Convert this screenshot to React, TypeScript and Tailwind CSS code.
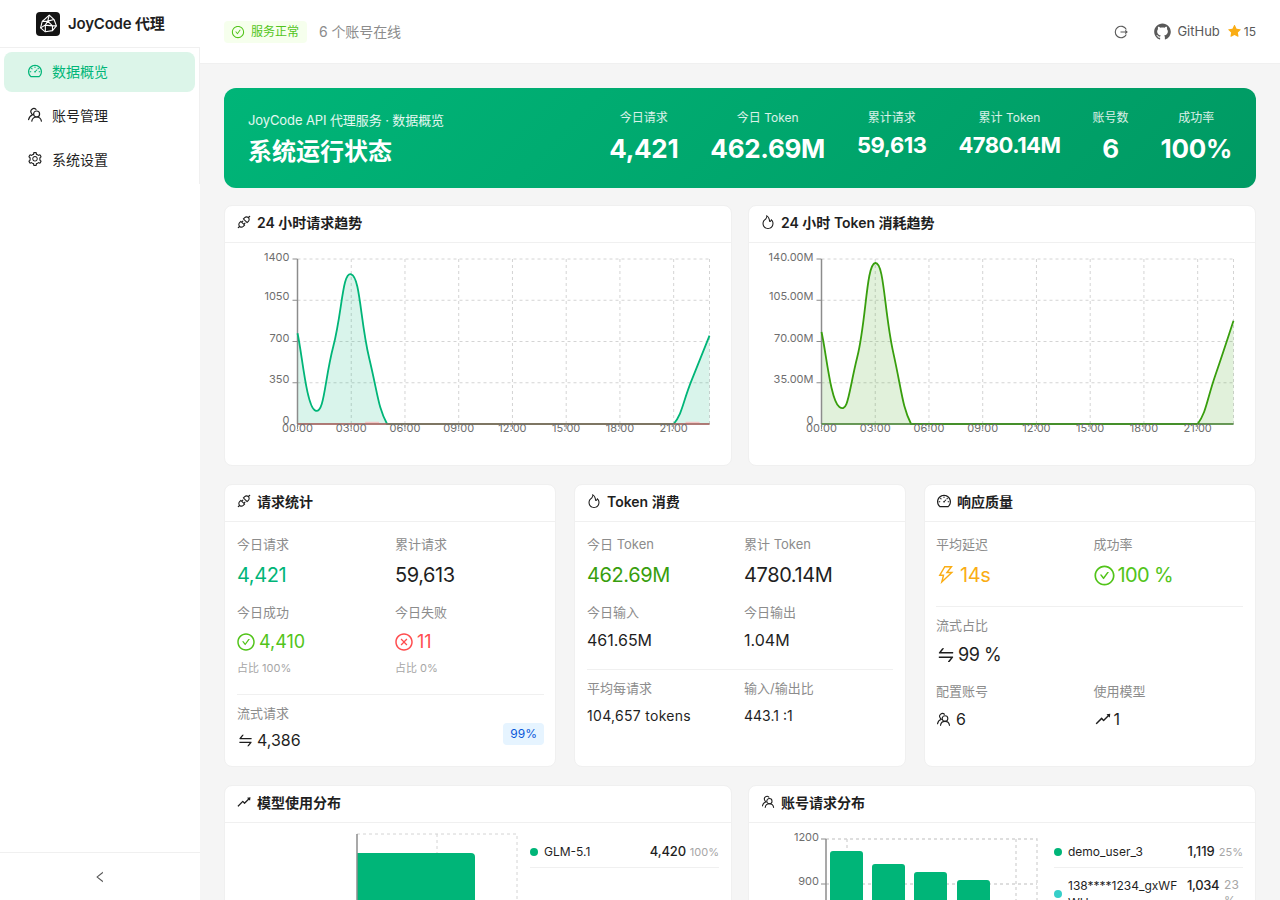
import React from "react";
import {
  AiOutlineDashboard, AiOutlineSetting, AiOutlineLeft, AiOutlineCheckCircle, AiOutlineCloseCircle,
  AiOutlineApi, AiOutlineFire, AiOutlineRise, AiOutlineSwap, AiOutlineThunderbolt, AiFillStar, AiFillGithub,
} from "react-icons/ai";

const Team = ({ className = "" }: { className?: string }) => (
  <svg viewBox="0 0 16 16" fill="none" stroke="currentColor" strokeWidth="1.2" strokeLinecap="round" className={className}>
    <circle cx="9.6" cy="7" r="3" />
    <path d="M4.8 14.2c.4-2.6 2.3-4.200 4.800-4.200s4.400 1.600 4.800 4.200" />
    <path d="M9 2.400A3 3 0 0 0 4.400 6.200c.3.700.7 1.200 1.300 1.600C3.400 8.600 2 10.400 1.600 12.600" />
  </svg>
);

const Logo = () => (
  <div className="w-6 h-6 rounded bg-[#141414] flex items-center justify-center">
    <svg viewBox="0 0 24 24" className="w-[19px] h-[19px]" fill="none" stroke="#fff" strokeWidth="1.4" strokeLinejoin="round">
      <path d="M13 1.500 19 7l3 8-5 6-9 1.500-6-5 2-8z" />
      <path d="M13 1.500 11 9 4 9.500M11 9l8-2M11 9l-3 5-6 3.500M8 14l9 1 5 0M8 14l0 8.500M11 9l6 6 0 6" />
    </svg>
  </div>
);

const hours = 24;
function smooth(xs: number[], ys: number[], bottom: number) {
  let d = `M${xs[0]} ${ys[0]}`;
  for (let i = 0; i < xs.length - 1; i++) {
    const p0 = i > 0 ? i - 1 : i, p3 = i + 2 < xs.length ? i + 2 : i + 1;
    const k = 0.25;
    let c1 = ys[i] + (ys[i + 1] - ys[p0]) * k;
    let c2 = ys[i + 1] - (ys[p3] - ys[i]) * k;
    const lo = Math.min(ys[i], ys[i + 1]), hi = Math.max(ys[i], ys[i + 1]);
    if (ys[i] === bottom || ys[i + 1] === bottom) { c1 = Math.min(Math.max(c1, lo), hi); c2 = Math.min(Math.max(c2, lo), hi); }
    d += `C${xs[i] + (xs[i + 1] - xs[p0]) * k} ${c1} ${xs[i + 1] - (xs[p3] - xs[i]) * k} ${c2} ${xs[i + 1]} ${ys[i + 1]}`;
  }
  return d;
}

function LineChart({ values, max, labels, color, overlay, pink }: { values: number[]; max: number; labels: string[]; color: string; overlay: string; pink?: boolean }) {
  const L = 72, R = 484, T = 16, B = 181;
  const step = (R - L) / 23;
  const xs = Array.from({ length: hours }, (_, i) => L + i * step);
  const ys = values.map((v) => B - (v / max) * (B - T));
  const line = smooth(xs, ys, B);
  const area = `${line}L${R} ${B}L${L} ${B}Z`;
  const grid = "#d4d4d4";
  const vx = [0, 3, 6, 9, 12, 15, 18, 21].map((h) => L + h * step);
  const hy = [0, 1, 2, 3].map((i) => T + (i * (B - T)) / 4);
  const ly = [T + 2, T + 41, T + 83, T + 124, B];
  return (
    <svg viewBox="0 0 505 222" className="block w-full h-[222px]" style={{ fontFamily: "Inter, sans-serif" }}>
      {hy.map((y) => <line key={y} x1={L} x2={R} y1={y} y2={y} stroke={grid} strokeDasharray="3 3" />)}
      {vx.slice(1).map((x) => <line key={x} x1={x} x2={x} y1={T} y2={B} stroke={grid} strokeDasharray="3 3" />)}
      <line x1={R} x2={R} y1={T} y2={B} stroke={grid} strokeDasharray="3 3" />
      <path d={area} fill={color} fillOpacity="0.15" />
      {hy.map((y) => <line key={y} x1={L - 5} x2={L} y1={y} y2={y} stroke="#8c8c8c" />)}
      <line x1={L} x2={L} y1={T} y2={B} stroke="#8c8c8c" strokeWidth="1.5" />
      <line x1={L} x2={R} y1={B} y2={B} stroke="#8c8c8c" />
      <path d={line} fill="none" stroke={color} strokeWidth="1.8" />
      {pink && <path d={`M${L + 4 * step - 4} ${B - 1.5}H${L + 4 * step + 10}M${L + 22 * step - 6} ${B - 1.5}H${L + 22 * step + 8}`} stroke="#f3c6c6" strokeWidth="1.5" />}
      <line x1={L} x2={R} y1={B} y2={B} stroke={overlay} strokeWidth="1.5" />
      {labels.map((t, i) => <text key={t} x={L - 8} y={ly[i]} textAnchor="end" fontSize="11" fill="#6e6e6e">{t}</text>)}
      {vx.map((x, i) => (
        <g key={x}>
          <text x={x} y={B + 8} textAnchor="middle" fontSize="11" fill="#6e6e6e">{["00:00", "03:00", "06:00", "09:00", "12:00", "15:00", "18:00", "21:00"][i]}</text>
          <line x1={x} x2={x} y1={B} y2={B + 5} stroke="#8c8c8c" />
        </g>
      ))}
    </svg>
  );
}

const Card = ({ icon, title, children, className = "" }: { icon: React.ReactNode; title: string; children: React.ReactNode; className?: string }) => (
  <div className={`bg-white rounded-lg border border-[#f0f0f0] overflow-hidden ${className}`}>
    <div className="h-[37px] pb-[4px] border-b border-[#f0f0f0] flex items-center gap-1.5 px-3 text-[14px] font-semibold text-[#1f1f1f]">
      <span className="w-3.5 h-3.5 flex items-center justify-center text-[16px]">{icon}</span>
      {title}
    </div>
    {children}
  </div>
);

const Label = ({ children }: { children: React.ReactNode }) => <div className="text-[13px] leading-[20px] text-[#8c8c8c]">{children}</div>;

const HeroStat = ({ label, value, size }: { label: string; value: string; size: string }) => (
  <div className="flex flex-col items-center">
    <div className="text-[12px] leading-[18px] text-white/85">{label}</div>
    <div className={`font-bold text-white ${size}`}>{value}</div>
  </div>
);

const big = "text-[26px] leading-[36px] mt-[4px] tracking-[-0.3px]";
const small = "text-[22px] leading-[30px] mt-[3px] tracking-[-0.5px]";

function App() {
  return (
    <div className="h-screen overflow-hidden flex bg-[#f5f5f5] font-[Inter,'Noto_Sans_CJK_SC',sans-serif] text-[#1f1f1f]">
      <aside className="w-[200px] shrink-0 bg-white flex flex-col">
        <div className="h-[48px] border-b border-[#f0f0f0] flex items-center pl-9 gap-2">
          <Logo />
          <span className="text-[15px] font-semibold mt-[2px] tracking-[-0.2px]">JoyCode 代理</span>
        </div>
        <nav className="border-r border-[#f0f0f0] p-1 flex flex-col gap-1 text-[14px]">
          <div className="h-10 pb-[2px] rounded-lg bg-[#dcf5e9] text-[#00b578] flex items-center pl-[23px] gap-[9px]"><AiOutlineDashboard className="w-4 h-4" />数据概览</div>
          <div className="h-10 pb-[2px] rounded-lg flex items-center pl-[23px] gap-[9px]"><Team className="w-4 h-4" />账号管理</div>
          <div className="h-10 pb-[2px] rounded-lg flex items-center pl-[23px] gap-[9px]"><AiOutlineSetting className="w-4 h-4" />系统设置</div>
        </nav>
        <div className="mt-auto h-[48px] border-t border-[#f0f0f0] flex items-center justify-center text-[#595959]"><AiOutlineLeft className="w-[14px] h-[14px]" /></div>
      </aside>
      <div className="flex-1 min-w-0 flex flex-col">
        <header className="h-[64px] shrink-0 bg-white border-b border-[#f0f0f0] flex items-center justify-between px-6">
          <div className="flex items-center gap-3">
            <span className="h-[22px] rounded bg-[#f6ffed] text-[#52c41a] text-[12px] flex items-center gap-[6px] pl-[7px] pr-2"><AiOutlineCheckCircle className="w-[14px] h-[14px]" />服务正常</span>
            <span className="text-[14px] text-[#8c8c8c] tracking-[-0.1px]">6 个账号在线</span>
          </div>
          <div className="flex items-center text-[#595959]">
            <svg viewBox="0 0 14 14" fill="none" stroke="currentColor" strokeWidth="1.1" className="w-3.5 h-3.5 mr-[25px]"><path d="M12.300 4.500A5.800 5.800 0 1 0 12.300 9.500" /><path d="M6.500 7H13M11.300 5.400 13 7l-1.700 1.600" /></svg>
            <AiFillGithub className="w-[19px] h-[19px] mr-[5px]" />
            <span className="text-[13px]">GitHub</span>
            <AiFillStar className="w-[15px] h-[15px] text-[#faad14] ml-[7px] mr-[2px]" />
            <span className="text-[12px]">15</span>
          </div>
        </header>
        <main className="flex-1 min-h-0 overflow-hidden p-6 flex flex-col gap-[18px]">
          <section className="h-[100px] shrink-0 -mb-px rounded-xl bg-[linear-gradient(135deg,#00b578,#009a63)] text-white flex items-center justify-between pl-6 pr-6">
            <div className="mt-[2px]">
              <div className="text-[13px] leading-[18px] text-white/90 tracking-[-0.1px]">JoyCode API 代理服务 · 数据概览</div>
              <div className="text-[24px] leading-[32px] font-bold mt-[7px]">系统运行状态</div>
            </div>
            <div className="flex items-start gap-8 -mt-px">
              <HeroStat label="今日请求" value="4,421" size={big} />
              <HeroStat label="今日 Token" value="462.69M" size={big} />
              <HeroStat label="累计请求" value="59,613" size={small} />
              <HeroStat label="累计 Token" value="4780.14M" size={small} />
              <HeroStat label="账号数" value="6" size={big} />
              <HeroStat label="成功率" value="100%" size={big} />
            </div>
          </section>
          <div className="grid grid-cols-2 gap-4 shrink-0">
            <Card icon={<AiOutlineApi className="shrink-0" />} title="24 小时请求趋势">
              <LineChart values={[770, 113, 660, 1270, 560, 0, 0, 0, 0, 0, 0, 0, 0, 0, 0, 0, 0, 0, 0, 0, 0, 0, 370, 750]} max={1400} labels={["1400", "1050", "700", "350", "0"]} color="#00b578" overlay="#a8625c" pink />
            </Card>
            <Card icon={<AiOutlineFire className="shrink-0" />} title="24 小时 Token 消耗趋势">
              <LineChart values={[78, 14.4, 57, 136.6, 61, 0, 0, 0, 0, 0, 0, 0, 0, 0, 0, 0, 0, 0, 0, 0, 0, 0, 42, 87.6]} max={140} labels={["140.00M", "105.00M", "70.00M", "35.00M", "0"]} color="#389e0d" overlay="#4a8a35" />
            </Card>
          </div>
          <div className="grid grid-cols-3 gap-[18px] shrink-0">
            <Card icon={<AiOutlineApi className="shrink-0" />} title="请求统计" className="h-[283px]">
              <div className="pt-3 pl-3 pr-[11px]">
                <div className="grid grid-cols-2 gap-x-[9px]">
                  <div><Label>今日请求</Label><div className="text-[20px] leading-[28px] tracking-[-0.4px] mt-[7px] text-[#00b578]">4,421</div></div>
                  <div><Label>累计请求</Label><div className="text-[20px] leading-[28px] tracking-[-0.4px] mt-[7px]">59,613</div></div>
                  <div className="mt-[13px]"><Label>今日成功</Label>
                    <div className="flex items-center gap-[3px] text-[18px] leading-[28px] mt-[6px] text-[#52c41a]"><AiOutlineCheckCircle className="w-[20px] h-[20px] -ml-px" />4,410</div>
                    <div className="text-[11px] leading-[16px] mt-[4px] text-[#a6a6a6]">占比 100%</div></div>
                  <div className="mt-[13px]"><Label>今日失败</Label>
                    <div className="flex items-center gap-[3px] text-[18px] leading-[28px] mt-[6px] text-[#ff4d4f]"><AiOutlineCloseCircle className="w-[20px] h-[20px] -ml-px" />11</div>
                    <div className="text-[11px] leading-[16px] mt-[4px] text-[#a6a6a6]">占比 0%</div></div>
                </div>
                <div className="border-t border-[#f0f0f0] mt-[18px] pt-[8px] flex items-end justify-between">
                  <div><Label>流式请求</Label><div className="flex items-center gap-[3px] text-[16px] leading-[24px] mt-[5px]"><AiOutlineSwap className="w-[17px] h-[17px]" />4,386</div></div>
                  <span className="h-[22px] px-[7px] mb-[7px] rounded bg-[#e6f4ff] text-[#0958d9] text-[12px] flex items-center">99%</span>
                </div>
              </div>
            </Card>
            <Card icon={<AiOutlineFire className="shrink-0" />} title="Token 消费" className="h-[283px]">
              <div className="p-3">
                <div className="grid grid-cols-2 gap-x-2">
                  <div><Label>今日 Token</Label><div className="text-[20px] leading-[28px] tracking-[-0.4px] mt-[7px] text-[#389e0d]">462.69M</div></div>
                  <div><Label>累计 Token</Label><div className="text-[20px] leading-[28px] tracking-[-0.4px] mt-[7px]">4780.14M</div></div>
                  <div className="mt-[13px]"><Label>今日输入</Label><div className="text-[16px] leading-[24px] mt-[6px]">461.65M</div></div>
                  <div className="mt-[13px]"><Label>今日输出</Label><div className="text-[16px] leading-[24px] mt-[6px]">1.04M</div></div>
                </div>
                <div className="border-t border-[#f0f0f0] mt-[17px] pt-[8px] grid grid-cols-2 gap-x-2">
                  <div><Label>平均每请求</Label><div className="text-[14px] leading-[22px] mt-[7px] tracking-[0.3px]">104,657 tokens</div></div>
                  <div><Label>输入/输出比</Label><div className="text-[14px] leading-[22px] mt-[7px]">443.1 :1</div></div>
                </div>
              </div>
            </Card>
            <Card icon={<AiOutlineDashboard className="shrink-0" />} title="响应质量" className="h-[283px]">
              <div className="pt-3 pl-[11px] pr-3">
                <div className="grid grid-cols-2 gap-x-2">
                  <div><Label>平均延迟</Label><div className="flex items-center gap-[3px] text-[20px] leading-[28px] tracking-[-0.4px] mt-[7px] text-[#faad14]"><AiOutlineThunderbolt className="w-[22px] h-[22px] -ml-px" />14s</div></div>
                  <div><Label>成功率</Label><div className="flex items-center gap-[2px] text-[20px] leading-[28px] tracking-[-0.6px] mt-[7px] text-[#52c41a]"><AiOutlineCheckCircle className="w-[23px] h-[23px] -ml-px" />100 %</div></div>
                </div>
                <div className="border-t border-[#f0f0f0] mt-[17px] pt-[8px]">
                  <Label>流式占比</Label><div className="flex items-center gap-[2px] text-[18px] leading-[26px] mt-[7px] tracking-[-0.5px]"><AiOutlineSwap className="w-[20px] h-[20px]" />99 %</div>
                </div>
                <div className="grid grid-cols-2 gap-x-2 mt-[13px]">
                  <div><Label>配置账号</Label><div className="flex items-center gap-[5px] text-[16px] leading-[24px] mt-[6px]"><Team className="w-[15px] h-[15px]" />6</div></div>
                  <div><Label>使用模型</Label><div className="flex items-center gap-[2px] text-[16px] leading-[24px] mt-[6px]"><AiOutlineRise className="w-[18px] h-[18px]" />1</div></div>
                </div>
              </div>
            </Card>
          </div>
          <div className="grid grid-cols-2 gap-4 shrink-0">
            <Card icon={<AiOutlineRise className="shrink-0" />} title="模型使用分布" className="h-[300px]">
              <div className="flex">
                <svg viewBox="0 0 305 80" className="w-[305px] h-[80px] shrink-0 block">
                  <path d="M132 11H292V80M212 11V80" fill="none" stroke="#d4d4d4" strokeDasharray="3 3" />
                  <path d="M132 30H246a4 4 0 0 1 4 4V80H132z" fill="#00b578" />
                  <line x1="132" x2="132" y1="11" y2="80" stroke="#8c8c8c" strokeWidth="1.5" />
                </svg>
                <div className="flex-1 min-w-0 pr-3">
                  <div className="h-[45px] pt-[14px] border-b border-[#f0f0f0] flex items-center text-[12px]">
                    <span className="w-2 h-2 rounded-full bg-[#00b578] mr-1.5" /><span>GLM-5.1</span>
                    <span className="ml-auto text-[13px] font-medium tracking-[-0.2px]">4,420</span><span className="ml-1 text-[#a6a6a6] text-[11px]">100%</span>
                  </div>
                </div>
              </div>
            </Card>
            <Card icon={<Team className="w-3.5 h-3.5 shrink-0" />} title="账号请求分布" className="h-[300px]">
              <div className="flex">
                <svg viewBox="0 0 305 80" className="w-[305px] h-[80px] shrink-0 block" style={{ fontFamily: "Inter, sans-serif" }}>
                  <path d="M77 16H288V80M98 16V80M267 16V80M77 61H288" fill="none" stroke="#d4d4d4" strokeWidth="1.3" strokeDasharray="3 3" />
                  {[[81, 28], [123, 41], [165, 49], [208, 57]].map(([x, y]) => <path key={x} d={`M${x} ${y + 3}a3 3 0 0 1 3-3H${x + 30}a3 3 0 0 1 3 3V80H${x}z`} fill="#00b578" />)}
                  <line x1="77" x2="77" y1="16" y2="80" stroke="#8c8c8c" strokeWidth="1.5" />
                  <path d="M72 16H77M72 61H77" stroke="#8c8c8c" />
                  <text x="70" y="18" textAnchor="end" fontSize="11" fill="#6e6e6e">1200</text>
                  <text x="70" y="62" textAnchor="end" fontSize="11" fill="#6e6e6e">900</text>
                </svg>
                <div className="flex-1 min-w-0 pr-3 text-[12px]">
                  <div className="h-[45px] pt-[14px] border-b border-[#f0f0f0] flex items-center">
                    <span className="w-2 h-2 rounded-full bg-[#00b578] mr-1.5 shrink-0" /><span>demo_user_3</span>
                    <span className="ml-auto text-[13px] font-medium">1,119</span><span className="ml-1 text-[#a6a6a6] text-[11px]">25%</span>
                  </div>
                  <div className="flex pt-[9px]">
                    <span className="w-2 h-2 rounded-full bg-[#36cfc9] mr-1.5 shrink-0 self-center" /><span className="w-[113px] shrink-0 leading-[17px] break-all">138****1234_gxWFWH</span>
                    <span className="ml-1.5 text-[13px] leading-[16px] font-medium tracking-[-0.4px] shrink-0">1,034</span>
                    <span className="ml-[5px] w-[19px] shrink-0 leading-[16px] text-[#a6a6a6] text-[12px]"><span className="block">23</span><span className="block">%</span></span>
                  </div>
                </div>
              </div>
            </Card>
          </div>
        </main>
      </div>
    </div>
  );
}

export default App;
